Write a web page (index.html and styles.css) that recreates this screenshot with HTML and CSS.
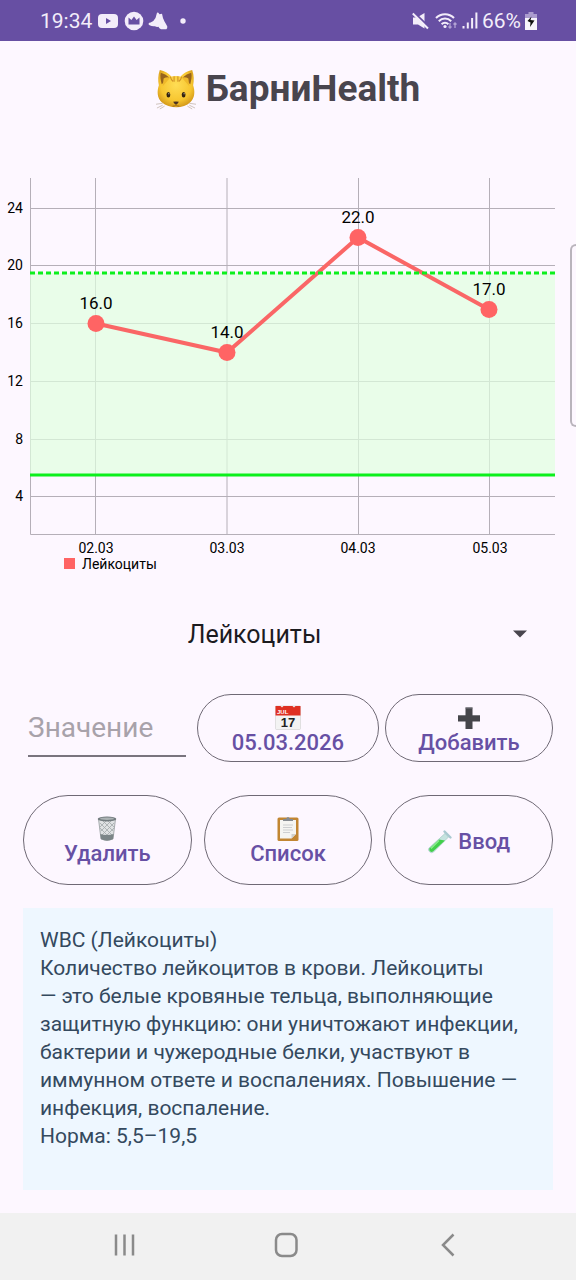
FILE: index.html
```html
<!DOCTYPE html>
<html lang="ru">
<head>
<meta charset="utf-8">
<meta name="viewport" content="width=device-width, initial-scale=1">
<title>БарниHealth</title>
<link rel="stylesheet" href="styles.css">
</head>
<body>
<div class="app">
  <header class="status-bar">
    <div class="status-group">
      <span class="clock">19:34</span>
      <svg class="icon" width="20" height="16" viewBox="0 0 20 16" aria-hidden="true"><rect y="1" width="20" height="14" rx="4" fill="#f3edfa"/><path d="M8 5l5 3-5 3z" fill="#674fa3"/></svg>
      <svg class="icon" width="20" height="20" viewBox="0 0 20 20" aria-hidden="true"><circle cx="10" cy="10" r="9.3" fill="#f3edfa"/><path d="M4.500 6.500l2.900 2.500L10 5.500l2.600 3.500 2.900-2.500V13.500h-11z" fill="#674fa3"/></svg>
      <svg class="icon icon-bell" width="20" height="18" viewBox="0 0 20 18" aria-hidden="true"><path d="M9 .8q.8-.6 1.400 0L11.500 2.200 14 1.800q.8 5 2.500 7.800t2.800 5q.2 2.400-1 2.600H13q-1.800-.4-2.600-2.400-2 .4-3.400-.6-2.600.6-5.400-1Q.2 12.600.6 11.500q.4-1 2-1.100Q6 9.200 7.500 6z" fill="#f3edfa"/></svg>
      <svg class="icon icon-dot" width="6" height="6" viewBox="0 0 6 6" aria-hidden="true"><circle cx="3" cy="3" r="2.700" fill="#f3edfa"/></svg>
    </div>
    <div class="status-group status-system">
      <svg class="icon" width="17" height="18" viewBox="0 0 17 18" aria-hidden="true"><path d="M1 5.500h4L12.500 1v15.500L6 12.500H1z" fill="#f3edfa"/><path d="M1.500 0L17 15" stroke="#674fa3" stroke-width="2"/><path d="M.8 1.500L16 16.500" stroke="#f3edfa" stroke-width="2"/></svg>
      <svg class="icon icon-wifi" width="23" height="18" viewBox="0 0 23 18" aria-hidden="true"><g fill="none" stroke="#f3edfa" stroke-width="2"><path d="M1 6a12.500 12.500 0 0 1 18 0"/><path d="M3.800 9.200a8.700 8.700 0 0 1 12.400 0"/><path d="M6.600 12.200a4.800 4.800 0 0 1 6.800 0"/></g><circle cx="10" cy="14.500" r="1.600" fill="#f3edfa"/><path d="M15 11v5m-1.500-1.500L15 16l1.500-1.500M20 16v-5m-1.500 1.500L20 11l1.500 1.500" fill="none" stroke="#b3a3d4" stroke-width="1.300"/></svg>
      <svg class="icon" width="16" height="17" viewBox="0 0 16 17" aria-hidden="true"><path d="M1.500 16.500v-2.500M5.800 16.500v-6M10.100 16.500V6M14.400 16.500V.5" stroke="#f3edfa" stroke-width="2"/></svg>
      <span class="battery">66%</span>
      <svg class="icon" width="12" height="18" viewBox="0 0 12 18" aria-hidden="true"><path d="M3.500 0h5v2H12v5H0V2h3.500z" fill="#ab9bce"/><path d="M0 6h12v12H0z" fill="#f8f4fc"/><path d="M6.500 4.500L5.500 8l4 .5L5 15l.5-4.500L2.500 9z" fill="#111"/></svg>
    </div>
  </header>

  <main class="content">
    <h1 class="title">
      <svg class="cat" width="40" height="42" viewBox="0 0 42 42" aria-hidden="true">
        <defs><radialGradient id="fur" cx="50%" cy="40%" r="60%"><stop offset="0" stop-color="#ffdd55"/><stop offset=".7" stop-color="#f7c630"/><stop offset="1" stop-color="#d59a1b"/></radialGradient></defs>
        <path d="M4 1c-2 6-2 11-1 16-2 6-2 13 3 18 8 7 23 7 30 0 5-5 5-12 3-18 1-5 1-10-1-16-5 1-10 4-12 7-3-1-7-1-10 0-2-3-7-6-12-7z" fill="url(#fur)"/>
        <path d="M5 4q5 1 9 5l-8 7c-1-4-2-8-1-12zm32 0q-5 1-9 5l8 7c1-4 2-8 1-12z" fill="#97631d"/>
        <path d="M8 10q3-2 7-1l-8 9z" fill="#efb92b"/><path d="M34 10q-3-2-7-1l8 9z" fill="#efb92b"/>
        <path d="M15 8q1 4 3 5M19 7.500v6M23 7.500v6M27 8q-1 4-3 5" fill="none" stroke="#d29327" stroke-width="1.200"/>
        <ellipse cx="13" cy="27" rx="2" ry="2.800" fill="#33230f"/><ellipse cx="29" cy="27" rx="2" ry="2.800" fill="#33230f"/>
        <circle cx="13.500" cy="26" r=".6" fill="#fff"/><circle cx="29.500" cy="26" r=".6" fill="#fff"/>
        <path d="M18 34.500q3-1 6 0l-1.500 2L21 37.500l-1.500-1z" fill="#4b3222"/><path d="M17.500 39q2.500.5 3.500-1.500 1 2 3.500 1.500" fill="none" stroke="#9c6819"/>
        <path d="M7 36l-7 1M7 38l-6 3M9 39l-5 3M35 36l7 1M35 38l6 3M33 39l5 3" stroke="#baa99b" stroke-width=".7"/>
      </svg>
      <span>БарниHealth</span>
    </h1>

    <svg class="chart" viewBox="0 170 576 410" role="img" aria-label="График: Лейкоциты">
      <g class="grid">
        <path d="M30 208.500H555M30 265.500H555M30 323.500H555M30 381.500H555M30 439.500H555M30 496.500H555"/>
        <path d="M95.500 178V534M227 178V534M358.500 178V534M489.500 178V534M30.500 178V534.500H555"/>
      </g>
      <rect class="norm" x="30" y="273" width="525" height="202"/>
      <path class="series" d="M96 323.500L227 352.500 358 237.500 489 309.500"/>
      <g class="points"><circle cx="96" cy="323.500" r="8.500"/><circle cx="227" cy="352.500" r="8.500"/><circle cx="358" cy="237.500" r="8.500"/><circle cx="489" cy="309.500" r="8.500"/></g>
      <path class="limit limit-high" d="M30 273H555"/>
      <path class="limit" d="M30 475H555"/>
      <g class="values"><text x="96" y="309">16.0</text><text x="227" y="338">14.0</text><text x="358" y="223">22.0</text><text x="489" y="295">17.0</text></g>
      <g class="axis-y"><text x="23" y="213">24</text><text x="23" y="270">20</text><text x="23" y="328">16</text><text x="23" y="386">12</text><text x="23" y="444">8</text><text x="23" y="501">4</text></g>
      <g class="axis-x"><text x="96" y="553">02.03</text><text x="227" y="553">03.03</text><text x="358" y="553">04.03</text><text x="490" y="553">05.03</text></g>
      <rect class="legend-mark" x="64" y="558" width="11" height="11"/>
      <text class="legend" x="82" y="569">Лейкоциты</text>
    </svg>

    <div class="picker">
      <select class="select" aria-label="Показатель"><option>Лейкоциты</option></select>
      <svg class="caret" width="14" height="8" viewBox="0 0 14 8" aria-hidden="true"><path d="M0 .5h14L7 7.500z" fill="#49454e"/></svg>
    </div>

    <div class="row row-entry">
      <div class="field"><input class="input" type="text" inputmode="decimal" placeholder="Значение" aria-label="Значение"></div>
      <button class="btn" type="button">
        <svg width="26" height="25" viewBox="0 0 26 25" aria-hidden="true"><rect x=".5" y="1" width="25" height="23.500" rx="1" fill="#f3f3f3" stroke="#d5d5d5" stroke-width=".7"/><path d="M.5 1h5l1.500 1.500L8.500 1h9L19 2.500 20.500 1h5v9.500H.5z" fill="#df3023"/><text class="cal-month" x="2" y="9">JUL</text><text class="cal-day" x="13" y="22">17</text></svg>
        <span>05.03.2026</span>
      </button>
      <button class="btn" type="button">
        <svg width="26" height="25" viewBox="0 0 26 25" aria-hidden="true"><path d="M9.500 2.500h7v7.500H24v6.500h-7.500V24h-7v-7.500H2V10h7.500z" fill="#45454a"/><path d="M9.500 3h7M2 10.500h7.500M16.500 10.500H24" stroke="#77777c"/></svg>
        <span>Добавить</span>
      </button>
    </div>

    <div class="row row-actions">
      <button class="btn" type="button">
        <svg width="26" height="25" viewBox="0 0 26 25" aria-hidden="true"><path d="M4.500 3h17L19 23q-6 3-12 0z" fill="#dfe2e3" stroke="#92999b" stroke-width=".8"/><path d="M6 7l12 12M9 5l10 10M14 5l6 6M6 12l7 7M20 7L8 19M17 5L7 15M12 5l-6 6M20 12l-7 7" stroke="#a2a9ab" stroke-width=".8"/><path d="M6.300 18q6.500 2 13.300 0L19 23q-6 3-12 0z" fill="#7b8587"/><ellipse cx="13" cy="3" rx="9.300" ry="2.500" fill="#737c7f"/><ellipse cx="13" cy="2.700" rx="7" ry="1.200" fill="#adb3b5"/></svg>
        <span>Удалить</span>
      </button>
      <button class="btn" type="button">
        <svg width="26" height="25" viewBox="0 0 26 25" aria-hidden="true"><rect x="2.500" y="1.500" width="21" height="23.500" rx="1.500" fill="#c28632"/><path d="M5 4h16v14l-4.500 4.500H5z" fill="#f5f5f2"/><path d="M21 18h-4.500v4.500z" fill="#d0d0cb"/><path d="M8 9h10M8 11.500h9M8 14h10M8 16.500h7" stroke="#c3c5c8" stroke-width=".8"/><path d="M8 5V3h3q2-4 4 0h3v2z" fill="#858b91"/></svg>
        <span>Список</span>
      </button>
      <button class="btn btn-inline" type="button">
        <svg width="26" height="25" viewBox="0 0 26 25" aria-hidden="true"><path d="M18 4.500l3.500 3.500L6.500 23q-2 1.500-4-.3t-.5-3.700z" fill="#c5e3df" stroke="#a2c8c4" stroke-width=".7"/><path d="M12 10.500l6 1L6 22.500q-1.500 1-3-.2t-.3-3z" fill="#42cf4a"/><path d="M12 11.500L4 19.500" stroke="#8eec8f" stroke-width="1.300"/><path d="M17.500 2.500l6 6" stroke="#a9c9d0" stroke-width="2.400" stroke-linecap="round"/></svg>
        <span>Ввод</span>
      </button>
    </div>

    <section class="info">
      <p>WBC (Лейкоциты)</p>
      <p>Количество лейкоцитов в крови. Лейкоциты —&nbsp;это белые кровяные тельца, выполняющие защитную функцию: они уничтожают инфекции, бактерии и чужеродные белки, участвуют в иммунном ответе и воспалениях. Повышение — инфекция, воспаление.</p>
      <p>Норма: 5,5–19,5</p>
    </section>
  </main>

  <nav class="nav-bar" aria-label="Системная навигация">
    <button class="nav-btn" type="button" aria-label="Недавние"><svg width="26" height="26" viewBox="0 0 26 26"><path d="M5 2.500v21M13.500 2.500v21M22 2.500v21"/></svg></button>
    <button class="nav-btn" type="button" aria-label="Главный экран"><svg width="26" height="26" viewBox="0 0 26 26"><rect x="3" y="2" width="20.500" height="22" rx="6"/></svg></button>
    <button class="nav-btn" type="button" aria-label="Назад"><svg width="26" height="26" viewBox="0 0 26 26"><path d="M17.500 2.500L7 13l10.500 10.500"/></svg></button>
  </nav>
  <div class="edge-handle"></div>
</div>
</body>
</html>
```
FILE: styles.css
```css
* {
  box-sizing: border-box;
}

body {
  margin: 0;
  background: #fdf7ff;
  font-family: Roboto, "Noto Sans", sans-serif;
  color: #1c1b1f;
}

.app {
  position: relative;
  display: flex;
  flex-direction: column;
  min-height: 100vh;
  overflow: hidden;
}

.status-bar {
  display: flex;
  justify-content: space-between;
  align-items: center;
  height: 41px;
  padding: 0 39px 0 40px;
  background: #674fa3;
  color: #f3edfa;
  font-size: 21px;
}

.status-group {
  display: flex;
  align-items: center;
  gap: 6px;
}

.status-system {
  gap: 4px;
}

.icon {
  display: block;
  flex: none;
}

.icon-bell {
  margin-left: -2px;
}

.icon-dot {
  margin-left: 6px;
}

.icon-wifi {
  margin-left: 2px;
}

.content {
  flex: 1;
  display: flex;
  flex-direction: column;
  padding-bottom: 23px;
}

.title {
  display: flex;
  justify-content: center;
  align-items: center;
  gap: 10px;
  margin: 0;
  padding: 23px 0 56px;
  font-size: 37px;
  line-height: 50px;
  font-weight: 700;
  color: #49454e;
}

.chart {
  display: block;
  width: 100%;
  font-size: 14px;
}

.grid {
  fill: none;
  stroke: #b5afb8;
  stroke-width: 1;
}

.norm {
  fill: #e0ffdf;
  fill-opacity: 0.7;
}

.series {
  fill: none;
  stroke: #fa6666;
  stroke-width: 4;
}

.points,
.legend-mark {
  fill: #ff6464;
}

.limit {
  stroke: #0cf01c;
  stroke-width: 3;
}

.limit-high {
  stroke-dasharray: 5 3;
}

.values {
  font-size: 17px;
  text-anchor: middle;
}

.axis-y {
  text-anchor: end;
}

.axis-x {
  text-anchor: middle;
}

.picker {
  display: grid;
  align-items: center;
  margin: 26px 23px 0;
}

.select {
  grid-area: 1 / 1;
  appearance: none;
  width: 100%;
  height: 56px;
  padding: 0 67px 0 0;
  border: 0;
  background: transparent;
  font: inherit;
  font-size: 25px;
  color: inherit;
  text-align: center;
  text-align-last: center;
}

.caret {
  grid-area: 1 / 1;
  justify-self: end;
  margin-right: 26px;
  pointer-events: none;
}

.row {
  display: grid;
  margin: 0 23px;
}

.row-entry {
  grid-template-columns: 12fr 13fr 12fr;
  gap: 6px;
  margin-top: 32px;
}

.row-actions {
  grid-template-columns: repeat(3, 1fr);
  gap: 12px;
  margin-top: 33px;
}

.field {
  padding: 0 5px 5px;
  display: flex;
}

.input {
  width: 100%;
  min-width: 0;
  padding: 6px 0 0;
  border: 0;
  border-bottom: 2px solid #79747e;
  background: transparent;
  font: inherit;
  font-size: 28px;
  color: inherit;
}

.input::placeholder {
  color: #a8a2aa;
  opacity: 1;
}

.btn {
  display: flex;
  flex-direction: column;
  align-items: center;
  justify-content: center;
  min-height: 68px;
  padding: 4px 0 0;
  border: 1px solid #6f6975;
  border-radius: 45px;
  background: transparent;
  font: inherit;
  font-size: 22px;
  line-height: 25px;
  font-weight: 500;
  color: #6750a4;
}

.row-actions .btn {
  min-height: 90px;
  padding-top: 2px;
}

.row-actions .btn-inline {
  flex-direction: row;
  gap: 5px;
}

.cal-month {
  font: 700 6px "Liberation Sans", sans-serif;
  fill: #fff;
}

.cal-day {
  font: 700 13px "Liberation Sans", sans-serif;
  fill: #222;
  text-anchor: middle;
}

.info {
  flex: 1;
  margin: 23px 23px 0;
  padding: 18px 17px;
  background: #eef7ff;
  font-size: 21px;
  line-height: 28px;
  color: #34495e;
}

.info p {
  margin: 0;
}

.nav-bar {
  display: flex;
  justify-content: space-around;
  align-items: center;
  height: 67px;
  padding: 0 46px 4px 43px;
  background: #f1f1f1;
}

.nav-btn {
  display: flex;
  padding: 8px;
  border: 0;
  background: transparent;
}

.nav-btn svg {
  fill: none;
  stroke: #8a8a8a;
  stroke-width: 2.5;
}

.edge-handle {
  position: absolute;
  top: 244px;
  right: 0;
  width: 6px;
  height: 183px;
  border: 2px solid #b9b4bc;
  border-right: 0;
  border-radius: 8px 0 0 8px;
}
```
